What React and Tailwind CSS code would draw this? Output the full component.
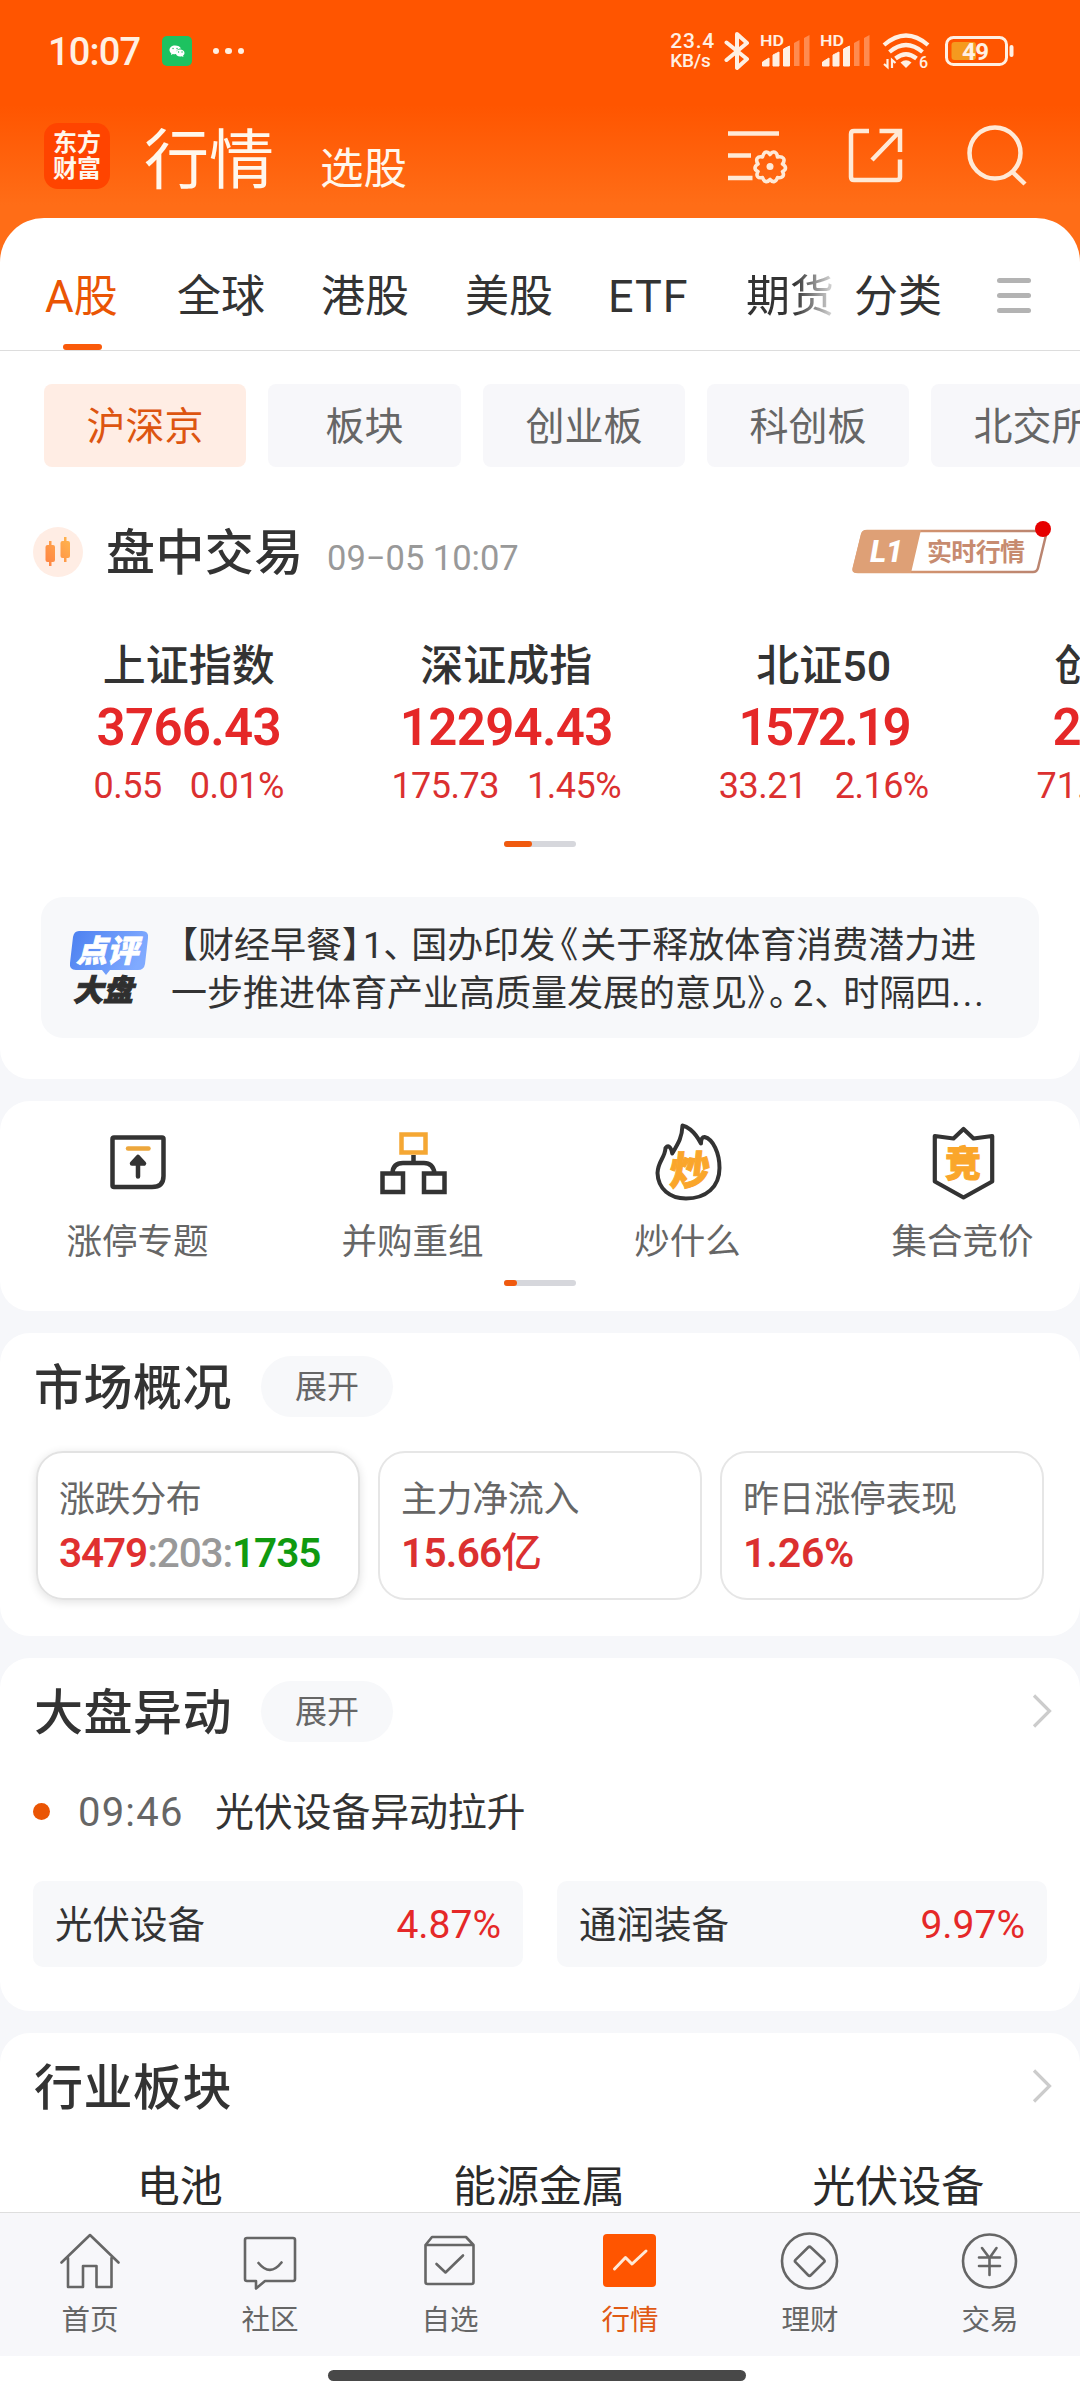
import React, { useState } from 'react';
import clsx from 'clsx';

const markets = [
  { name: 'A股', width: 'w-[132px]' },
  { name: '全球', width: 'w-[144px]' },
  { name: '港股', width: 'w-[144px]' },
  { name: '美股', width: 'w-[143px]' },
  { name: 'ETF', width: 'w-[138px]' },
];

const boards = [
  { name: '沪深京', width: 'w-[202px]' },
  { name: '板块', width: 'w-[193px]' },
  { name: '创业板', width: 'w-[202px]' },
  { name: '科创板', width: 'w-[202px]' },
  { name: '北交所', width: 'w-[202px]' },
];

const indices = [
  { name: '上证指数', value: '3766.43', change: '0.55', percent: '0.01%', spacing: 'tracking-[-0.700px]' },
  { name: '深证成指', value: '12294.43', change: '175.73', percent: '1.45%', spacing: 'tracking-[-0.700px]' },
  { name: '北证50', value: '1572.19', change: '33.21', percent: '2.16%', spacing: 'tracking-[-2.700px]' },
];

const SignalIcon = () => (
  <svg viewBox="0 0 50 34" className="h-[34px] w-[50px] overflow-visible" fill="#fff0e3">
    <text x="0" y="12" fontSize="15.5" fontWeight="600" textLength="24" lengthAdjust="spacingAndGlyphs">HD</text>
    <path d="M2.500 32V28L9 24V32Z M13 32V21L19 18V32Z M23.500 32V15L29.500 12V32Z" stroke="#fff0e3" strokeWidth="1" strokeLinejoin="round" />
    <path d="M34 32V9L39.500 6V32Z M44 32V4L49.500 1V32Z" opacity="0.35" />
  </svg>
);

const StatusBar = () => (
  <div className="flex h-[102px] items-center pl-[48px] text-[#fff0e3]">
    <span className="mt-[2px] w-[93px] text-[38px] font-medium leading-none tracking-[-0.800px]">10:07</span>
    <svg viewBox="0 0 30 30" className="ml-[21px] h-[30px] w-[30px]">
      <rect width="30" height="30" rx="5" fill="#1dc260" />
      <path d="M13 9.500c-3.200 0-5.500 2-5.500 4.400 0 1.300.7 2.500 1.800 3.300l-.4 1.800 2-1.100c1.300.3 2.500.3 3.300.1-.5-3.200 1.700-5.500 4.700-5.400-.6-2-3-3.100-5.900-3.100z" fill="#fff" />
      <path d="M18 13.500c2.500 0 4.500 1.500 4.500 3.500 0 1.100-.6 2-1.400 2.600l.3 1.500-1.700-.9c-3.300.8-6-.9-6-3.200 0-2 1.900-3.500 4.300-3.500z" fill="#fff" />
      <path d="M11 12.500h.1M15 12.500h.1M16.500 16h.1M20 16h.1" stroke="#1dc260" strokeWidth="1.300" strokeLinecap="round" />
    </svg>
    <div className="ml-[21px] flex gap-[6px]">
      <i className="size-[6.400px] rounded-full bg-[#fff0e3]" />
      <i className="size-[6.400px] rounded-full bg-[#fff0e3]" />
      <i className="size-[6.400px] rounded-full bg-[#fff0e3]" />
    </div>
    <div className="ml-[426px] flex h-[38px] w-[46px] flex-col justify-between text-[21px] font-medium leading-[18px]">
      <span className="tracking-[0.800px]">23.4</span>
      <span className="text-[19px] tracking-[-0.200px]">KB/s</span>
    </div>
    <svg viewBox="0 0 26 40" className="ml-[8px] h-[40px] w-[26px]" fill="none" stroke="#fff0e3" strokeWidth="4" strokeLinejoin="round" strokeLinecap="round">
      <path d="M2.500 11.500L23 28L13 37V3L23 12L2.500 29" />
    </svg>
    <div className="ml-[10px] flex gap-[10px]">
      <SignalIcon />
      <SignalIcon />
    </div>
    <svg viewBox="0 0 46 36" className="ml-[13px] h-[36px] w-[46px] overflow-visible" fill="none" stroke="#fff0e3" strokeWidth="4.200">
      <path d="M1 12Q23 -7 45 12M6.500 19Q23 5 39.500 19M12.500 25.500Q23 17 33.500 25.500" />
      <path d="M17.500 29.500Q23 25 28.500 29.500L23 35Z" fill="#fff0e3" stroke="none" />
      <path d="M4.500 26v8L1 31M9 35v-8l3.500 3" strokeWidth="2.200" />
      <text x="36" y="35" fontSize="16" fontWeight="500" fill="#fff0e3" stroke="none">6</text>
    </svg>
    <svg viewBox="0 0 70 30" className="ml-[16px] h-[30px] w-[70px] overflow-visible">
      <rect x="1.500" y="1.500" width="60" height="27" rx="7" fill="none" stroke="#fff0e3" strokeWidth="3" />
      <path d="M66.500 11v8" stroke="#fff0e3" strokeWidth="4" strokeLinecap="round" />
      <rect x="6.500" y="6" width="24.500" height="18" rx="3" fill="#f59a1f" />
      <text x="17" y="23.500" fontSize="24" fontWeight="700" fill="#fff0e3" textLength="27">49</text>
    </svg>
  </div>
);

const TitleBar = () => (
  <div className="flex h-[116px] pl-[44px] text-[#fff7ec]">
    <div className="mt-[21px] flex h-[66px] w-[66px] flex-col items-center justify-center rounded-[14px] bg-[#ff4400] text-[24px] font-bold leading-[26px]">
      <span>东方</span>
      <span>财富</span>
    </div>
    <span className="ml-[34px] mt-[19px] w-[140px] text-[65px] leading-[80px]">行情</span>
    <span className="ml-[36px] mt-[40px] w-[100px] text-[43.500px] leading-[56px]">选股</span>
    <svg viewBox="0 0 60 60" className="ml-[308px] mt-[26px] h-[60px] w-[60px]" fill="none" stroke="#ffe9d6" strokeWidth="4.500">
      <path d="M0 5.500h51M0 27.500h23M0 50h24.500" />
      <path d="M42 26.500C45 22 49 24 49.500 29C55 28 58 31 54.500 36C58.500 38.500 58.500 41.500 54.500 43.500C57 48 54 50.500 49.500 49.500C48 54 45 55 42 51.500C39 55 36 54 34.500 49.500C30 50.500 27.500 48 30 43.500C26 41.500 26 38.500 30 36C27 31 29.500 28 34.500 29C35.500 24 39 22 42 26.500Z" strokeWidth="3.600" strokeLinejoin="round" />
      <circle cx="42" cy="38.500" r="3.500" fill="#ffe9d6" stroke="none" />
    </svg>
    <svg viewBox="0 0 56 56" className="ml-[60px] mt-[26px] h-[56px] w-[56px]" fill="none" stroke="#ffe9d6" strokeWidth="4.500">
      <path d="M21 3H6Q3 3 3 6V49Q3 52 6 52H49Q52 52 52 49V31.500M31.500 3H52V24M51 4L24 32" />
    </svg>
    <svg viewBox="0 0 62 62" className="ml-[63px] mt-[22px] h-[62px] w-[62px]" fill="none" stroke="#ffe9d6" strokeWidth="4.500">
      <circle cx="28" cy="29" r="25.500" />
      <path d="M45 47.500L58 60" />
    </svg>
  </div>
);

const MarketTabs = ({ active, setActive }) => (
  <div className="flex h-[133px] border-b border-[#dddddd] pl-[45px] text-[44px] leading-[60px] text-[#333333]">
    {markets.map((m) => (
      <button key={m.name} onClick={() => setActive(m.name)} className={clsx('flex shrink-0 flex-col items-start', m.width, active === m.name && 'text-[#ea5504]')}>
        <span className={clsx('mt-[49px]', m.name === 'ETF' && 'text-[45px] tracking-[1px]')}>{m.name}</span>
        {active === m.name && <i className="ml-[18px] mt-[17px] h-[6px] w-[39px] rounded-full bg-[#fa5a0a]" />}
      </button>
    ))}
    <span className="mt-[49px] h-[60px] w-[88px] bg-[linear-gradient(to_right,#333_55%,#ccc_95%)] bg-clip-text text-transparent">期货</span>
    <span className="ml-[20px] mt-[49px] w-[88px]">分类</span>
    <div className="ml-[55px] mt-[60px] flex flex-col gap-[10.500px]">
      <i className="h-[4.500px] w-[34px] rounded-full bg-[#b3b3b3]" />
      <i className="h-[4.500px] w-[34px] rounded-full bg-[#b3b3b3]" />
      <i className="h-[4.500px] w-[34px] rounded-full bg-[#b3b3b3]" />
    </div>
  </div>
);

const BoardChips = ({ board, setBoard }) => (
  <div className="mt-[33px] flex gap-[22px] overflow-hidden pl-[44px]">
    {boards.map((b) => (
      <button
        key={b.name}
        onClick={() => setBoard(b.name)}
        className={clsx('h-[83px] shrink-0 rounded-lg pt-[4px] text-[39px]', b.width, board === b.name ? 'bg-[#ffede4] text-[#dd5510]' : 'bg-[#f7f7fa] text-[#666666]')}
      >
        {b.name}
      </button>
    ))}
  </div>
);

const TradingHeader = () => (
  <div className="mt-[50px] flex h-[70px] items-center pl-[33px]">
    <svg viewBox="0 0 50 50" className="h-[50px] w-[50px]">
      <defs>
        <linearGradient id="candle" x1="0" y1="1" x2="1" y2="0">
          <stop offset="0" stopColor="#ff8244" />
          <stop offset="1" stopColor="#ffb64e" />
        </linearGradient>
      </defs>
      <circle cx="25" cy="25" r="25" fill="#ffede4" />
      <path d="M16 14h2.500v4h1.500q2 0 2 2v13q0 2-2 2h-1.500v4H16v-4h-1.500q-2 0-2-2V20q0-2 2-2H16zM31 10h2.500v4H35q2 0 2 2v13q0 2-2 2h-1.500v4H31v-4h-1.500q-2 0-2-2V16q0-2 2-2H31z" fill="url(#candle)" />
    </svg>
    <h2 className="ml-[23px] mt-[4px] w-[200px] text-[49px] font-medium leading-[70px] tracking-[0.400px] text-[#333333]">盘中交易</h2>
    <span className="ml-[21px] mt-[12px] w-[190px] text-[34.500px] leading-[40px] text-[#999999]">09−05 10:07</span>
    <svg viewBox="0 0 204 56" className="ml-[334px] mt-[-9px] h-[56px] w-[204px] overflow-visible">
      <defs>
        <linearGradient id="level" x1="0" y1="0" x2="1" y2="0">
          <stop offset="0" stopColor="#e2a878" />
          <stop offset="0.350" stopColor="#d3936f" />
          <stop offset="1" stopColor="#b98470" />
        </linearGradient>
      </defs>
      <path d="M16 11H192Q196 11 195 15L187 48Q186 52 182 52H7Q2 52 3 48L11 15Q12 11 16 11Z" fill="#fff" stroke="url(#level)" strokeWidth="2.500" />
      <path d="M15 10H70L60 53H6Q0 53 1.500 48L10 14Q11 10 15 10Z" fill="#dea076" />
      <text x="19" y="42" fontSize="31" fontWeight="800" fontStyle="italic" fill="#fff" textLength="33">L1</text>
      <text x="76" y="41" fontSize="25" fontWeight="700" fill="#c78b70" textLength="98">实时行情</text>
      <circle cx="192" cy="9" r="8" fill="#e60000" />
    </svg>
  </div>
);

const IndexList = () => (
  <div className="mt-[49px] flex h-[183px] overflow-hidden pl-[30px]">
    {indices.map((item) => (
      <div key={item.name} className="flex w-[317.500px] shrink-0 flex-col items-center">
        <span className="text-[43px] font-medium leading-[60px] text-[#333333]">{item.name}</span>
        <span className={clsx('mt-[1px] text-[51px] font-semibold leading-[62px] text-[#e52828]', item.spacing)}>{item.value}</span>
        <div className="mt-[2px] flex gap-[28px] text-[36px] leading-[50px] tracking-[-0.500px] text-[#db3030]">
          <span>{item.change}</span>
          <span>{item.percent}</span>
        </div>
      </div>
    ))}
    <div className="flex w-[60px] shrink-0 flex-col pl-[54px]">
      <span className="ml-[18px] text-[43px] font-medium leading-[60px] text-[#333333]">创</span>
      <span className="ml-[16px] mt-[1px] text-[51px] font-semibold leading-[62px] text-[#e52828]">2</span>
      <span className="mt-[2px] text-[36px] leading-[50px] text-[#db3030]">71.</span>
    </div>
  </div>
);

const Pager = ({ thumb, className }) => (
  <div className={clsx('mx-auto h-[6px] w-[72px] rounded-full bg-[#d6d7dc]', className)}>
    <div className={clsx('h-full rounded-full bg-[#f05a0f]', thumb)} />
  </div>
);

const NewsCard = () => (
  <div className="mx-[41px] mt-[50px] flex h-[141px] rounded-[22px] bg-[#f7f8fa]">
    <svg viewBox="0 0 84 80" className="ml-[28px] mt-[32px] h-[80px] w-[84px] shrink-0 overflow-visible">
      <defs>
        <linearGradient id="bubble" x1="0" y1="0" x2="1" y2="0.300">
          <stop offset="0" stopColor="#4b80f0" />
          <stop offset="1" stopColor="#80aaff" />
        </linearGradient>
      </defs>
      <path d="M10 2H73Q80 2 79 9L76 35Q75 41 69 41H41L37 46L33 41H7Q0 41 1 34L4 8Q5 2 10 2Z" fill="url(#bubble)" />
      <text x="7" y="33" fontSize="31" fontWeight="900" fontStyle="italic" fill="#fff" stroke="#fff" strokeWidth="0.700" textLength="62">点评</text>
      <text x="4" y="72" fontSize="30" fontWeight="900" fontStyle="italic" fill="#2f2f2f" stroke="#2f2f2f" strokeWidth="1" textLength="60">大盘</text>
    </svg>
    <div className="ml-[18px] mt-[25px] text-[36px] leading-[48px] text-[#333333]">
      <p>
        <span className="ml-[9px] [font-feature-settings:'halt']">【</span>财经早餐<span className="[font-feature-settings:'halt']">】</span>
        <span className="ml-[3px]">1</span><span className="mr-[10px] [font-feature-settings:'halt']">、</span>国办印发<span className="ml-[5px] mr-[2px] [font-feature-settings:'halt']">《</span>关于释放体育消费潜力进
      </p>
      <p>
        一步推进体育产业高质量发展的意见<span className="mr-[4px] [font-feature-settings:'halt']">》</span><span className="mr-[6px] [font-feature-settings:'halt']">。</span>2<span className="ml-[1px] mr-[11px] [font-feature-settings:'halt']">、</span>时隔四<span className="tracking-[2px]">...</span>
      </p>
    </div>
  </div>
);

const LimitUpIcon = () => (
  <svg viewBox="0 0 80 80" className="size-20" fill="none" stroke="#333" strokeWidth="4.500" strokeLinejoin="round" strokeLinecap="round">
    <path d="M16 16.500H64Q65.500 16.500 65.500 18V55Q65.500 66 54 66H16Q14.500 66 14.500 64.500V18Q14.500 16.500 16 16.500Z" />
    <path d="M30 27.500H50.500" stroke="#eda73c" />
    <path d="M40 40V55.500M34 42.500L40 36L46 42.500Z" fill="#333" />
  </svg>
);

const MergeIcon = () => (
  <svg viewBox="0 0 80 80" className="size-20" fill="none" stroke="#333" strokeWidth="4.500">
    <path d="M28.500 13.500H52.500V31.500H28.500Z" stroke="#f5a733" />
    <path d="M40.500 34V42M19.500 52Q20 42 30 42H51Q60 42 61.500 52M9.500 52.500H30V71H9.500ZM51 52.500H71.500V71H51Z" />
  </svg>
);

const FlameIcon = () => (
  <svg viewBox="0 0 80 80" className="size-20 overflow-visible">
    <path d="M34.500 4.500C34 16 31 21 24.200 32.500C23 25 20 24 17.500 27C17 37 10 40 9.500 52C10 68 22 77.500 38 77.500C58 77.500 71.500 66 71.500 47C71.500 32 65 18 56.500 16C54 16 53 18 53 22.500C46 9 38 5 34.500 4.500Z" fill="none" stroke="#333" strokeWidth="4" strokeLinejoin="round" />
    <text x="27" y="64" fontSize="40" fontWeight="900" fill="#faa62b" stroke="#faa62b" strokeWidth="1" transform="skewX(-6)">炒</text>
  </svg>
);

const ShieldIcon = () => (
  <svg viewBox="0 0 80 80" className="size-20 overflow-visible">
    <path d="M40.500 8L30.500 17.500L11.800 15V60.500L40.500 76.500L69.200 60.500V15L50.500 17.500Z" fill="none" stroke="#333" strokeWidth="4.200" strokeLinejoin="round" />
    <text x="22" y="56" fontSize="36" fontWeight="900" fill="#faa62b" stroke="#faa62b" strokeWidth="1">竞</text>
  </svg>
);

const tools = [
  { name: '涨停专题', Icon: LimitUpIcon },
  { name: '并购重组', Icon: MergeIcon },
  { name: '炒什么', Icon: FlameIcon },
  { name: '集合竞价', Icon: ShieldIcon },
];

const ToolGrid = () => (
  <section className="mt-[22px] h-[210px] shrink-0 rounded-[30px] bg-white">
    <div className="flex pt-[20px]">
      {tools.map(({ name, Icon }) => (
        <div key={name} className="flex w-[275px] shrink-0 flex-col items-center">
          <Icon />
          <span className="mt-[17px] text-[35.500px] leading-[48px] text-[#666666]">{name}</span>
        </div>
      ))}
    </div>
    <Pager className="mt-[14px]" thumb="w-[13px]" />
  </section>
);

const Chevron = () => (
  <svg viewBox="0 0 20 34" className="ml-auto mr-[28px] h-[34px] w-[20px]" fill="none" stroke="#cccccc" strokeWidth="3.200">
    <path d="M2 1.500L17.500 17L2 32.500" />
  </svg>
);

const SectionTitle = ({ title, expandable, arrow }) => (
  <div className="flex h-[62px] items-center pl-[34px]">
    <h2 className="mt-[5px] w-[200px] text-[49px] font-medium leading-[62px] tracking-[0.500px] text-[#333333]">{title}</h2>
    {expandable && <button className="ml-[27px] h-[61px] w-[132px] rounded-full bg-[#f7f8fa] pt-[2px] text-[32px] text-[#666666]">展开</button>}
    {arrow && <Chevron />}
  </div>
);

const MarketOverview = () => (
  <section className="mt-[22px] h-[303px] shrink-0 rounded-[30px] bg-white pt-[22px]">
    <SectionTitle title="市场概况" expandable />
    <div className="mt-[34px] grid grid-cols-3 gap-[18px] px-[36px] text-[36px] leading-[50px] text-[#666666]">
      <div className="h-[149px] rounded-[27px] border-2 border-[#e2e2e2] pl-[21px] pt-[22px] shadow-[0_2px_10px_rgba(0,0,0,0.12)]">
        <p className="tracking-[-0.400px]">涨跌分布</p>
        <p className="mt-[3px] text-[40.500px] font-medium tracking-[-1.100px] text-[#999999]">
          <span className="font-semibold text-[#e03030]">3479</span>:203:<span className="font-semibold text-[#109a10]">1735</span>
        </p>
      </div>
      <div className="h-[149px] rounded-[27px] border-2 border-[#e6e6e6] pl-[21px] pt-[22px]">
        <p className="tracking-[-0.400px]">主力净流入</p>
        <p className="mt-[3px] text-[40.500px] font-semibold tracking-[-0.700px] text-[#db3030]">15.66<span className="font-medium">亿</span></p>
      </div>
      <div className="h-[149px] rounded-[27px] border-2 border-[#e6e6e6] pl-[21px] pt-[22px]">
        <p className="tracking-[-0.400px]">昨日涨停表现</p>
        <p className="mt-[3px] text-[41px] font-semibold tracking-[-0.200px] text-[#db3030]">1.26%</p>
      </div>
    </div>
  </section>
);

const StockBox = ({ name, percent }) => (
  <div className="flex h-[86px] items-center justify-between rounded-[10px] bg-[#f7f8fa] px-[22px] pt-[3px] text-[37.500px]">
    <span className="text-[#333333]">{name}</span>
    <span className="text-[39px] text-[#e52828]">{percent}</span>
  </div>
);

const MarketMoves = () => (
  <section className="mt-[22px] h-[353px] shrink-0 rounded-[30px] bg-white pt-[22px]">
    <SectionTitle title="大盘异动" expandable arrow />
    <div className="mt-[39px] flex h-[60px] items-center pl-[33px] text-[39px]">
      <i className="size-[17px] rounded-full bg-[#ea5504]" />
      <span className="ml-[28px] mt-[3px] w-[109px] text-[40px] tracking-[1.200px] text-[#666666]">09:46</span>
      <span className="ml-[28px] mt-[4px] tracking-[-0.200px] text-[#333333]">光伏设备异动拉升</span>
    </div>
    <div className="mt-[40px] grid grid-cols-2 gap-[34px] px-[33px]">
      <StockBox name="光伏设备" percent="4.87%" />
      <StockBox name="通润装备" percent="9.97%" />
    </div>
  </section>
);

const IndustryBoards = () => (
  <section className="mt-[22px] h-[200px] shrink-0 rounded-t-[30px] bg-white pt-[22px]">
    <SectionTitle title="行业板块" arrow />
    <div className="mt-[40px] grid grid-cols-3 pr-[2px] text-center text-[43px] leading-[60px] text-[#2b2b2b]">
      <span>电池</span>
      <span>能源金属</span>
      <span>光伏设备</span>
    </div>
  </section>
);

const NavIcon = ({ children }) => (
  <svg viewBox="0 0 60 60" className="size-[60px]" fill="none" stroke="#666" strokeWidth="2.600" strokeLinejoin="round" strokeLinecap="round">
    {children}
  </svg>
);

const BottomNav = () => (
  <nav className="shrink-0">
    <div className="grid h-[144px] grid-cols-6 border-t border-[#dedede] bg-[#f7f7fa] pt-[18px] text-[28.500px] leading-[40px] text-[#666666]">
      <a className="flex flex-col items-center">
        <NavIcon>
          <path d="M1.500 31.500L30 4L58.500 31.500M8 27V56H23V35H36.500V56H51.500V27" />
        </NavIcon>
        <span className="mt-[10px]">首页</span>
      </a>
      <a className="flex flex-col items-center">
        <NavIcon>
          <path d="M7 7H53Q55 7 55 9V48Q55 50 53 50H25L16 57.500V50H7Q5 50 5 48V9Q5 7 7 7ZM18.500 32Q30 46 41.500 31.500" />
        </NavIcon>
        <span className="mt-[10px]">社区</span>
      </a>
      <a className="flex flex-col items-center">
        <NavIcon>
          <path d="M5.500 14L12 6H46L53.500 14V51Q53.500 53 51.500 53H7.500Q5.500 53 5.500 51ZM5.500 14H53.500M16.500 33L25.500 41.500L43 24.500" />
        </NavIcon>
        <span className="mt-[10px]">自选</span>
      </a>
      <a className="flex flex-col items-center text-[#e05a14]">
        <NavIcon>
          <rect x="3" y="3" width="53" height="53" rx="4" fill="#ff5500" stroke="none" />
          <path d="M14.500 38L25.500 26.500L32 33L46 20" stroke="#ffe9d6" strokeWidth="3" />
        </NavIcon>
        <span className="mt-[10px]">行情</span>
      </a>
      <a className="flex flex-col items-center">
        <NavIcon>
          <circle cx="29.500" cy="30" r="27.500" />
          <path d="M28 16.500Q29.500 15 31 16.500L44 28.800Q45.200 30 44 31.200L31 44Q29.500 45.500 28 44L15.500 31.200Q14.300 30 15.500 28.800Z" />
        </NavIcon>
        <span className="mt-[10px]">理财</span>
      </a>
      <a className="flex flex-col items-center">
        <NavIcon>
          <circle cx="29.500" cy="30" r="26.500" />
          <path d="M22 17L29.500 27L36.500 17M29.500 27V44M19 26.500H40M19 35H40" />
        </NavIcon>
        <span className="mt-[10px]">交易</span>
      </a>
    </div>
    <div className="flex h-[44px] justify-center bg-white pr-[6px] pt-[14px]">
      <i className="h-[11px] w-[418px] rounded-full bg-[#484848]" />
    </div>
  </nav>
);

const App = () => {
  const [active, setActive] = useState('A股');
  const [board, setBoard] = useState('沪深京');

  return (
    <div className="flex h-[2400px] w-[1080px] flex-col overflow-hidden whitespace-nowrap bg-[#f6f7fa] font-[Roboto,'Noto_Sans_CJK_SC',sans-serif]">
      <main className="flex h-[2212px] shrink-0 flex-col overflow-hidden">
        {/* Orange header shows behind the rounded top of the first card */}
        <div className="shrink-0 bg-[linear-gradient(to_bottom,#ff5500_0,#ff5500_105px,#ff6d17_205px,#ff6d17_300px,#f6f7fa_300px)]">
          <StatusBar />
          <TitleBar />
          <section className="h-[861px] rounded-t-[44px] rounded-b-[30px] bg-white">
            <MarketTabs active={active} setActive={setActive} />
            <BoardChips board={board} setBoard={setBoard} />
            <TradingHeader />
            <IndexList />
            <Pager className="mt-[22px]" thumb="w-[28px]" />
            <NewsCard />
          </section>
        </div>
        <ToolGrid />
        <MarketOverview />
        <MarketMoves />
        <IndustryBoards />
      </main>
      <BottomNav />
    </div>
  );
};

export default App;
